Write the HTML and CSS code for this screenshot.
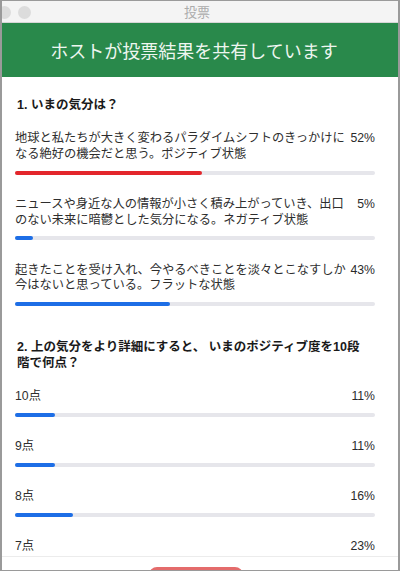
FILE: index.html
```html
<!DOCTYPE html>
<html lang="ja">
<head>
  <meta charset="UTF-8">
  <meta name="viewport" content="width=device-width, initial-scale=1.0">
  <title>投票</title>
  <link rel="stylesheet" href="styles.css">
</head>
<body>
  <div class="window">
    <div class="titlebar">
      <div class="lights">
        <span class="light"></span>
        <span class="light"></span>
      </div>
      <span class="title">投票</span>
    </div>

    <div class="banner">ホストが投票結果を共有しています</div>

    <div class="results">
      <div class="question">
        <h2>1. いまの気分は？</h2>
        <div class="option">
          <div class="option-row">
            <span class="option-text">地球と私たちが大きく変わるパラダイムシフトのきっかけになる絶好の機会だと思う。ポジティブ状態</span>
            <span class="option-pct">52%</span>
          </div>
          <div class="bar"><div class="bar-fill top" style="width: 52%"></div></div>
        </div>
        <div class="option">
          <div class="option-row">
            <span class="option-text">ニュースや身近な人の情報が小さく積み上がっていき、出口のない未来に暗鬱とした気分になる。ネガティブ状態</span>
            <span class="option-pct">5%</span>
          </div>
          <div class="bar"><div class="bar-fill" style="width: 5%"></div></div>
        </div>
        <div class="option">
          <div class="option-row">
            <span class="option-text">起きたことを受け入れ、今やるべきことを淡々とこなすしか今はないと思っている。フラットな状態</span>
            <span class="option-pct">43%</span>
          </div>
          <div class="bar"><div class="bar-fill" style="width: 43%"></div></div>
        </div>
      </div>

      <div class="question">
        <h2>2. 上の気分をより詳細にすると、 いまのポジティブ度を10段階で何点？</h2>
        <div class="option">
          <div class="option-row">
            <span class="option-text">10点</span>
            <span class="option-pct">11%</span>
          </div>
          <div class="bar"><div class="bar-fill" style="width: 11%"></div></div>
        </div>
        <div class="option">
          <div class="option-row">
            <span class="option-text">9点</span>
            <span class="option-pct">11%</span>
          </div>
          <div class="bar"><div class="bar-fill" style="width: 11%"></div></div>
        </div>
        <div class="option">
          <div class="option-row">
            <span class="option-text">8点</span>
            <span class="option-pct">16%</span>
          </div>
          <div class="bar"><div class="bar-fill" style="width: 16%"></div></div>
        </div>
        <div class="option">
          <div class="option-row">
            <span class="option-text">7点</span>
            <span class="option-pct">23%</span>
          </div>
          <div class="bar"><div class="bar-fill" style="width: 23%"></div></div>
        </div>
      </div>
    </div>

    <div class="footer">
      <button class="stop-btn" aria-label="共有の停止"></button>
    </div>
  </div>
</body>
</html>
```

FILE: styles.css
```css
body {
  margin: 0;
  font-family: "Liberation Sans", "Noto Sans CJK JP", sans-serif;
  background-color: #fff;
  color: #333;
}

.window {
  height: 571px;
  box-sizing: border-box;
  border: 1px solid #9a9a9a;
  border-left-width: 2px;
  border-right-width: 2px;
  display: flex;
  flex-direction: column;
  overflow: hidden;
}

.titlebar {
  position: relative;
  height: 22px;
  box-sizing: border-box;
  background-color: #f4f4f4;
  border-bottom: 1px solid #d6d6d6;
  display: flex;
  align-items: center;
  justify-content: center;
  padding-right: 6px;
}

.lights {
  position: absolute;
  left: -4px;
  top: 5px;
  display: flex;
  gap: 7px;
}

.light {
  width: 13px;
  height: 13px;
  border-radius: 50%;
  background-color: #dcdcdc;
}

.title {
  font-size: 13px;
  color: #ababab;
}

.banner {
  height: 54px;
  flex-shrink: 0;
  background-color: #29894b;
  color: #eef6f0;
  font-size: 18px;
  display: flex;
  align-items: center;
  justify-content: center;
  padding-right: 12px;
}

.results {
  flex: 1;
  overflow: hidden;
  padding: 20px 23px 0 13px;
}

.question + .question {
  padding-top: 11px;
}

.question h2 {
  margin: 0 0 18px;
  padding: 0 8px 0 2px;
  font-size: 12.5px;
  line-height: 16px;
  font-weight: bold;
  color: #1a1a1a;
}

.option {
  margin-bottom: 22.25px;
}

.option-row {
  display: flex;
  font-size: 12.25px;
  line-height: 15.75px;
  color: #2e2e2e;
}

.option-text {
  flex: 1;
}

.option-pct {
  width: 27px;
  text-align: right;
  color: #2a2a2a;
}

.bar {
  margin-top: 8px;
  height: 4px;
  border-radius: 2px;
  background-color: #e6e6eb;
}

.bar-fill {
  height: 100%;
  border-radius: 2px;
  background-color: #1d6ee6;
}

.bar-fill.top {
  background-color: #e3262b;
}

.footer {
  height: 13px;
  flex-shrink: 0;
  border-top: 1px solid #ececec;
  display: flex;
  justify-content: center;
  padding-right: 8px;
  overflow: hidden;
}

.stop-btn {
  margin-top: 10px;
  width: 94px;
  height: 24px;
  border: none;
  border-radius: 8px;
  background-color: #e46b6b;
}
```
